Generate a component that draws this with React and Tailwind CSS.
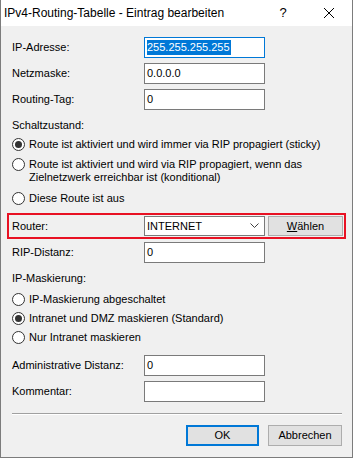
import React from "react";

const font = { fontFamily: '"Liberation Sans", Arial, sans-serif' };

function Radio({ checked }) {
  return (
    <div className="w-[13px] h-[13px] rounded-full border border-[#333333] bg-white flex items-center justify-center shrink-0">
      {checked && <div className="w-[7px] h-[7px] rounded-full bg-[#333333]" />}
    </div>
  );
}

function Field({ label, value, focused, className = "" }) {
  return (
    <div className={"flex items-center h-[21px] " + className}>
      <div className="w-[143px] pl-[11px] text-[11px] text-black whitespace-nowrap">{label}</div>
      <div
        className={
          "w-[121px] h-[21px] bg-white flex items-center px-[2px] text-[11px] " +
          (focused ? "border border-[#0078d7]" : "border border-[#7a7a7a]")
        }
      >
        {focused ? (
          <span className="bg-[#0078d7] text-white leading-[15px] pr-[1px]">{value}</span>
        ) : (
          <span className="text-black leading-[15px]">{value}</span>
        )}
      </div>
    </div>
  );
}

function RadioRow({ checked, children, className = "" }) {
  return (
    <div className={"flex items-center pl-[11px] gap-[4px] h-[15px] text-[11px] text-black whitespace-nowrap " + className}>
      <Radio checked={checked} />
      <span>{children}</span>
    </div>
  );
}

export default function App() {
  return (
    <div style={font} className="w-[353px] h-[458px] border-x border-b border-[#7c7c7c] bg-[#f0f0f0] flex flex-col">
      {/* Title bar */}
      <div className="h-[26px] bg-white flex items-center shrink-0">
        <div className="pl-[3px] text-[12px] text-black flex-1 whitespace-nowrap">IPv4-Routing-Tabelle - Eintrag bearbeiten</div>
        <div className="w-[20px] text-[13px] text-black text-center mr-[30px]">?</div>
        <svg width="12" height="12" viewBox="0 0 12 12" className="mr-[17px]">
          <path d="M1 1 L11 11 M11 1 L1 11" stroke="#000" strokeWidth="1" />
        </svg>
      </div>

      {/* Body */}
      <div className="flex flex-col pt-[11px]">
        <Field label="IP-Adresse:" value="255.255.255.255" focused />
        <Field label="Netzmaske:" value="0.0.0.0" className="mt-[5px]" />
        <Field label="Routing-Tag:" value="0" className="mt-[5px]" />

        <div className="mt-[8px] pl-[11px] h-[15px] text-[11px] leading-[15px] text-black">Schaltzustand:</div>
        <RadioRow checked className="mt-[4px]">Route ist aktiviert und wird immer via RIP propagiert (sticky)</RadioRow>
        <div className="mt-[6px] flex items-start pl-[11px] gap-[4px] text-[11px] leading-[13px] text-black">
          <div>
            <Radio />
          </div>
          <span className="whitespace-nowrap">
            Route ist aktiviert und wird via RIP propagiert, wenn das
            <br />
            Zielnetzwerk erreichbar ist (konditional)
          </span>
        </div>
        <RadioRow className="mt-[7px]">Diese Route ist aus</RadioRow>

        {/* Router highlighted */}
        <div className="mt-[7px] ml-[6px] w-[339px] h-[26px] border-2 border-[#e81123] flex items-center">
          <div className="w-[135px] pl-[3px] text-[11px] text-black">Router:</div>
          <div className="w-[121px] h-[20px] bg-white border border-[#7a7a7a] flex items-center justify-between px-[2px] text-[11px] text-black">
            <span>INTERNET</span>
            <svg width="9" height="6" viewBox="0 0 9 6" className="mr-[3px]">
              <path d="M0.5 0.5 L4.5 4.5 L8.5 0.5" stroke="#404040" strokeWidth="1" fill="none" />
            </svg>
          </div>
          <div className="ml-[3px] w-[75px] h-[20px] bg-[#e1e1e1] border border-[#adadad] flex items-center justify-center text-[11px] text-black">
            <span>
              <span className="underline">W</span>ählen
            </span>
          </div>
        </div>

        <Field label="RIP-Distanz:" value="0" className="mt-[3px]" />

        <div className="mt-[8px] pl-[11px] h-[15px] text-[11px] leading-[15px] text-black">IP-Maskierung:</div>
        <RadioRow className="mt-[6px]">IP-Maskierung abgeschaltet</RadioRow>
        <RadioRow checked className="mt-[4px]">Intranet und DMZ maskieren (Standard)</RadioRow>
        <RadioRow className="mt-[4px]">Nur Intranet maskieren</RadioRow>

        <Field label="Administrative Distanz:" value="0" className="mt-[10px]" />
        <Field label="Kommentar:" value="" className="mt-[5px]" />

        <div className="mt-[11px] ml-[11px] w-[330px] border-t border-[#a0a0a0] border-b border-b-white" />

        <div className="mt-[10px] flex justify-end gap-[9px] pr-[10px]">
          <div className="w-[73px] h-[21px] bg-[#e1e1e1] border-2 border-[#0078d7] flex items-center justify-center text-[11px] text-black">OK</div>
          <div className="w-[74px] h-[21px] bg-[#e1e1e1] border border-[#adadad] flex items-center justify-center text-[11px] text-black">Abbrechen</div>
        </div>
      </div>
    </div>
  );
}
